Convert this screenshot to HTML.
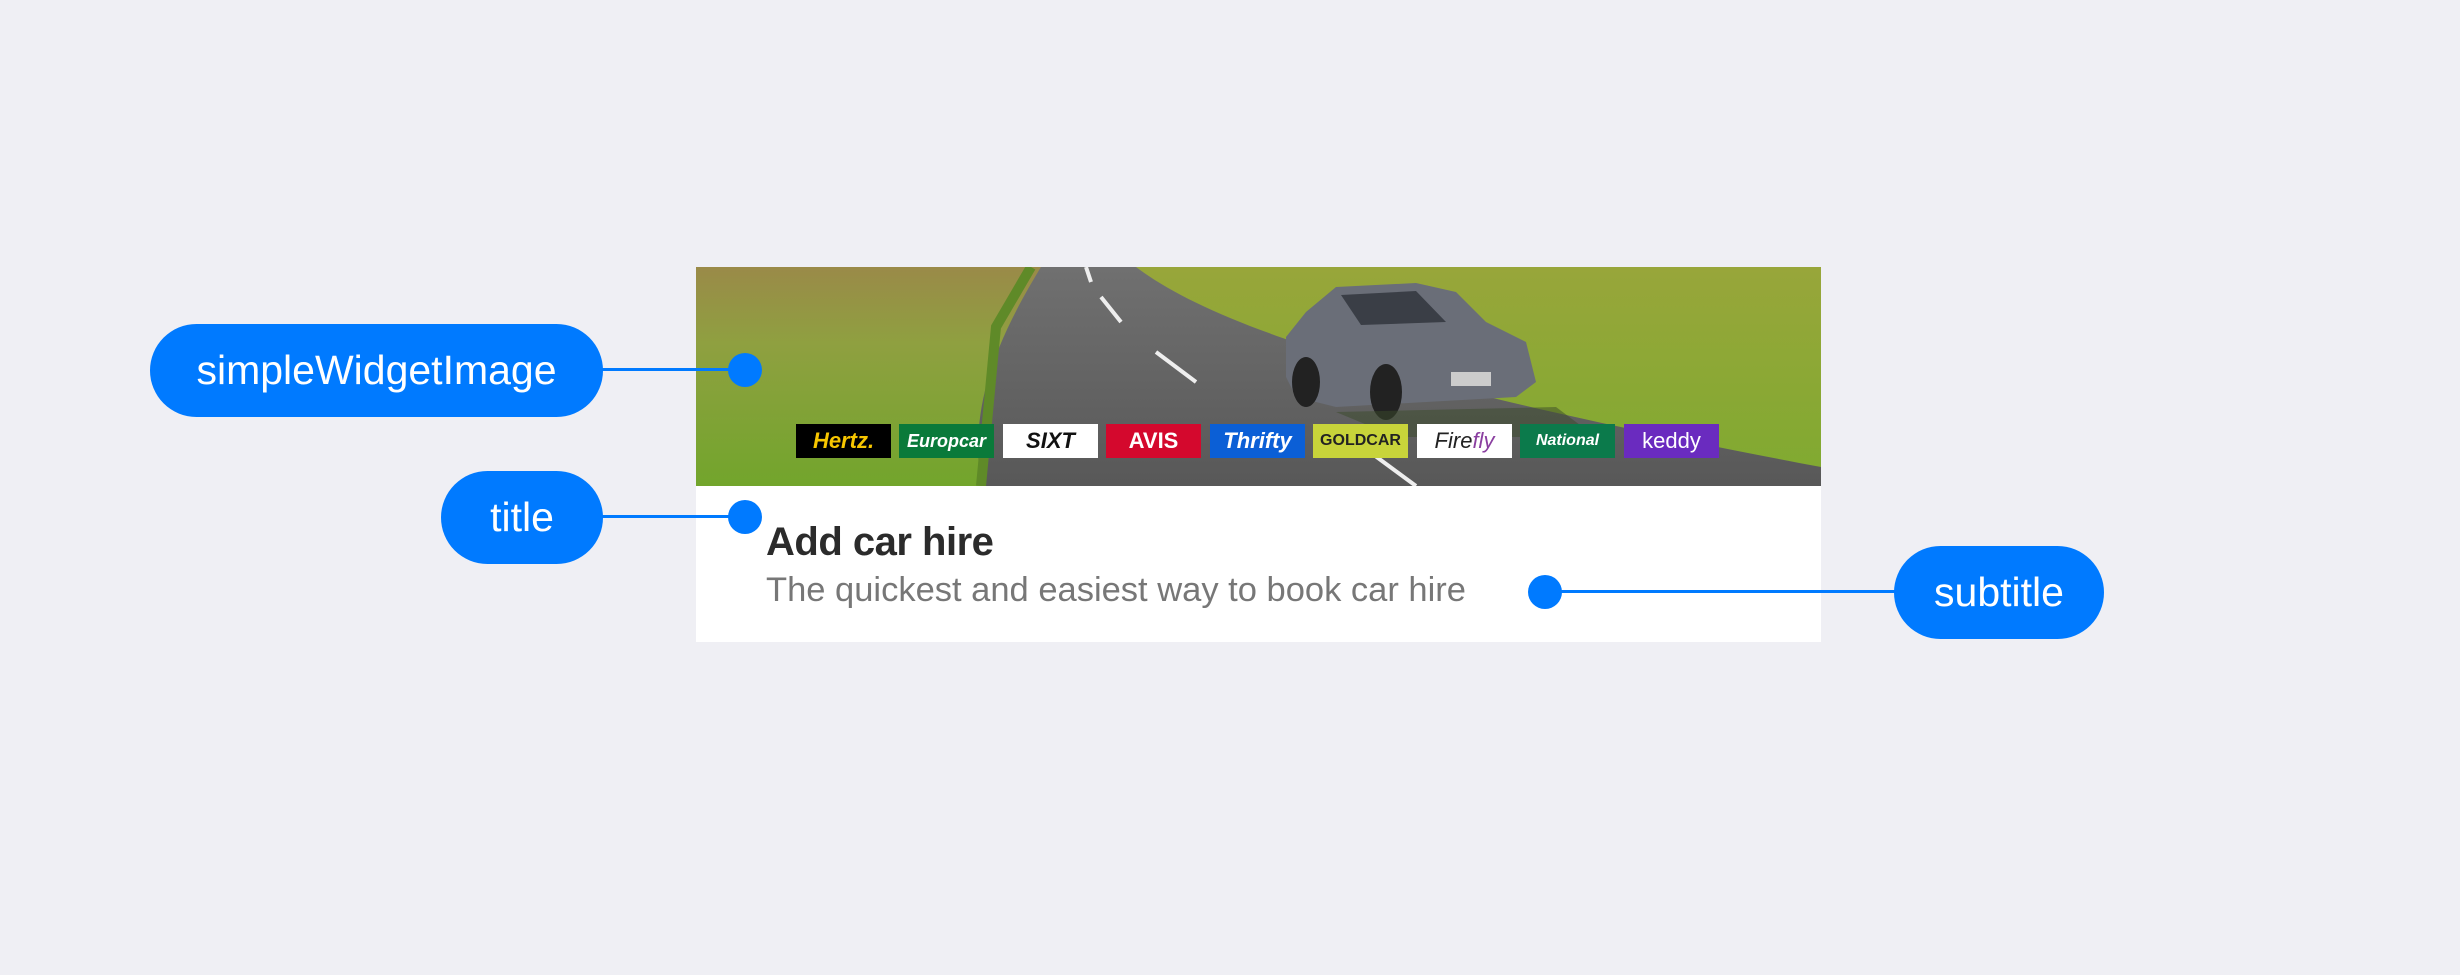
<!DOCTYPE html>
<html><head><style>
html,body{margin:0;padding:0;}
body{width:2460px;height:975px;background:#efeff4;position:relative;overflow:hidden;font-family:"Liberation Sans",Arial,sans-serif;}
.card{position:absolute;left:696px;top:267px;width:1125px;height:375px;background:#fff;}
.img{position:absolute;left:0;top:0;width:1125px;height:219px;overflow:hidden;}
.title{position:absolute;left:70px;top:253px;font-size:40px;font-weight:bold;color:#2b2b2b;letter-spacing:-0.5px;}
.sub{position:absolute;left:70px;top:304px;font-size:34.5px;color:#777;}
.pill{position:absolute;background:#007aff;color:#fff;font-size:41px;border-radius:47px;display:flex;align-items:center;justify-content:center;height:93px;}
.line{position:absolute;height:3px;background:#007aff;}
.dot{position:absolute;width:34px;height:34px;border-radius:50%;background:#007aff;}
.logo{position:absolute;top:157px;width:95px;height:34px;display:flex;align-items:center;justify-content:center;font-weight:bold;font-style:italic;font-size:22px;box-sizing:border-box;}
</style></head><body>
<div class="card">
 <div class="img">
  <svg width="1125" height="219" viewBox="0 0 1125 219">
   <defs>
    <linearGradient id="g1" x1="0" y1="0" x2="0" y2="1"><stop offset="0" stop-color="#9a8a48"/><stop offset="0.35" stop-color="#8fa040"/><stop offset="1" stop-color="#72a52c"/></linearGradient>
    <linearGradient id="g2" x1="0" y1="0" x2="0" y2="1"><stop offset="0" stop-color="#98a63a"/><stop offset="1" stop-color="#7faa30"/></linearGradient>
    <linearGradient id="rd" x1="0" y1="0" x2="0" y2="1"><stop offset="0" stop-color="#707070"/><stop offset="1" stop-color="#585858"/></linearGradient>
   </defs>
   <rect width="1125" height="219" fill="url(#g2)"/>
   <rect width="420" height="219" fill="url(#g1)"/>
   <path d="M345 0 L440 0 C520 60 700 120 1125 200 L1125 219 L285 219 C275 150 290 90 345 0Z" fill="url(#rd)"/>
   <path d="M390 0 L395 15 M405 30 L425 55 M460 85 L500 115 M640 160 L720 219" stroke="#eee" stroke-width="4" fill="none"/>
   <path d="M335 0 L300 60 L285 219" stroke="#5f8a28" stroke-width="10" fill="none"/>
   <path d="M590 110 L590 70 L610 45 L640 20 L720 16 L760 25 L790 55 L830 75 L840 115 L820 130 L640 140 L600 130Z" fill="#6a6e78"/>
   <path d="M645 28 L720 24 L750 55 L665 58Z" fill="#3a3e46"/>
   <ellipse cx="610" cy="115" rx="14" ry="25" fill="#222"/>
   <ellipse cx="690" cy="125" rx="16" ry="28" fill="#222"/>
   <rect x="755" y="105" width="40" height="14" fill="#ccc"/>
   <path d="M640 145 L860 140 L900 170 L700 170Z" fill="#3a4a2a" opacity="0.5"/>
  </svg>
  <div class="logo" style="left:100px;background:#000;color:#f7c600;">Hertz.</div>
  <div class="logo" style="left:203px;background:#0a7a3a;color:#fff;font-size:18px;">Europcar</div>
  <div class="logo" style="left:307px;background:#fff;color:#111;">SIXT</div>
  <div class="logo" style="left:410px;background:#d4082d;color:#fff;font-style:normal;">AVIS</div>
  <div class="logo" style="left:514px;background:#0b5fd6;color:#fff;">Thrifty</div>
  <div class="logo" style="left:617px;background:#c8d43a;color:#222;font-size:16px;font-style:normal;">GOLDCAR</div>
  <div class="logo" style="left:721px;background:#fff;color:#222;font-weight:normal;">Fire<span style="color:#8a3fa0">fly</span></div>
  <div class="logo" style="left:824px;background:#0b7a4b;color:#fff;font-size:16px;">National</div>
  <div class="logo" style="left:928px;background:#6a2bbf;color:#fff;font-style:normal;font-weight:normal;">keddy</div>
 </div>
 <div class="title">Add car hire</div>
 <div class="sub">The quickest and easiest way to book car hire</div>
</div>
<div class="pill" style="left:150px;top:324px;width:453px;">simpleWidgetImage</div>
<div class="line" style="left:600px;top:368px;width:145px;"></div>
<div class="dot" style="left:728px;top:353px;"></div>
<div class="pill" style="left:441px;top:471px;width:162px;">title</div>
<div class="line" style="left:600px;top:515px;width:145px;"></div>
<div class="dot" style="left:728px;top:500px;"></div>
<div class="pill" style="left:1894px;top:546px;width:210px;">subtitle</div>
<div class="line" style="left:1545px;top:590px;width:352px;"></div>
<div class="dot" style="left:1528px;top:575px;"></div>
</body></html>
